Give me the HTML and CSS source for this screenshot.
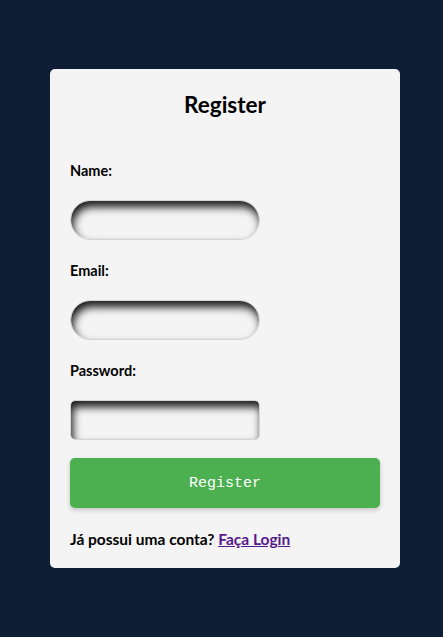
FILE: index.html
```html
<!DOCTYPE html>
<html lang="pt">
<head>
<meta charset="utf-8">
<title>Register</title>
<link rel="stylesheet" href="styles.css">
</head>
<body>
<main class="page">
  <form class="card">
    <h2 class="title">Register</h2>
    <label class="label" for="name">Name:</label>
    <input class="field field-round" id="name" type="text">
    <label class="label" for="email">Email:</label>
    <input class="field field-round" id="email" type="email">
    <label class="label" for="password">Password:</label>
    <input class="field field-square" id="password" type="password">
    <button class="btn" type="button">Register</button>
    <p class="foot">Já possui uma conta? <a class="link" href="#">Faça Login</a></p>
  </form>
</main>
</body>
</html>
```

FILE: styles.css
```css
* { box-sizing: border-box; }
html, body { margin: 0; padding: 0; }
body {
  background: #0e1f35;
  font-family: Lato, "Open Sans", sans-serif;
  color: #000;
}
.page {
  min-height: 637px;
  padding-left: 7px;
  display: flex;
  align-items: center;
  justify-content: center;
}
.card {
  width: 350px;
  background: #f4f4f4;
  border-radius: 5px;
  padding: 20px 20px 19px;
  display: flex;
  flex-direction: column;
  align-items: flex-start;
}
.title {
  align-self: stretch;
  text-align: center;
  margin: 0 0 40px;
  font-size: 22.5px;
  line-height: 32px;
  font-weight: 700;
}
.label {
  font-size: 14.5px;
  line-height: 20px;
  font-weight: 700;
  margin-bottom: 19px;
}
.field {
  width: 190px;
  height: 40px;
  border: 1px solid #d4d4d4;
  background: #f4f4f4;
  box-shadow: inset 2px 6px 8px rgba(0,0,0,0.9);
  margin: 0 0 21px;
  outline: none;
}
.field-round { border-radius: 20px; }
.field-square { border-radius: 5px; margin-bottom: 18px; }
.btn {
  width: 310px;
  height: 50px;
  border: none;
  border-radius: 5px;
  background: #4caf50;
  color: #fff;
  font-family: "Liberation Mono", monospace;
  font-size: 15px;
  box-shadow: 0 2px 5px rgba(0,0,0,0.2);
}
.foot {
  margin: 21px 0 0;
  font-size: 15.5px;
  line-height: 20px;
  font-weight: 700;
}
.link { color: #551a8b; }
```
